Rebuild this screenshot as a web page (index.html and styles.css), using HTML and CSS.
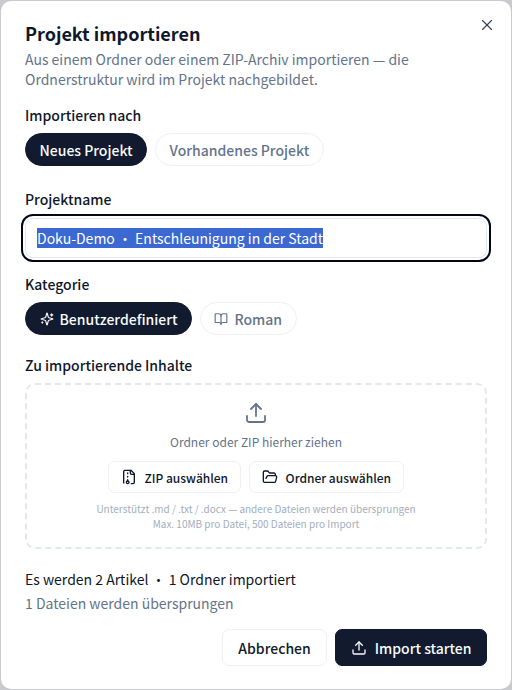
FILE: index.html
```html
<!DOCTYPE html>
<html lang="de">
<head>
    <meta charset="UTF-8">
    <meta name="viewport" content="width=device-width, initial-scale=1.0">
    <title>Projekt importieren</title>
    <link rel="stylesheet" href="styles.css">
</head>
<body>
    <div class="dialog">
        <button class="close" type="button" aria-label="Schließen">
            <svg viewBox="0 0 24 24" width="18" height="18"><path d="M18 6 6 18M6 6l12 12"/></svg>
        </button>

        <h1 class="title">Projekt importieren</h1>
        <p class="desc">Aus einem Ordner oder einem ZIP-Archiv importieren — die Ordnerstruktur wird im Projekt nachgebildet.</p>

        <div class="field field-target">
            <div class="label">Importieren nach</div>
            <div class="pills">
                <button class="pill active" type="button">Neues Projekt</button>
                <button class="pill" type="button">Vorhandenes Projekt</button>
            </div>
        </div>

        <div class="field field-name">
            <div class="label">Projektname</div>
            <div class="input"><span class="selected">Doku-Demo · Entschleunigung in der Stadt</span></div>
        </div>

        <div class="field field-cat">
            <div class="label">Kategorie</div>
            <div class="pills">
                <button class="pill active" type="button">
                    <svg class="icon" viewBox="0 0 24 24" width="14" height="14"><path d="M9.937 15.500A2 2 0 0 0 8.500 14.063l-6.135-1.582a.5.5 0 0 1 0-.962L8.500 9.936A2 2 0 0 0 9.937 8.500l1.582-6.135a.5.5 0 0 1 .963 0L14.063 8.500A2 2 0 0 0 15.500 9.937l6.135 1.581a.5.5 0 0 1 0 .964L15.500 14.063a2 2 0 0 0-1.437 1.437l-1.582 6.135a.5.5 0 0 1-.963 0z"/><path d="M20 3v4M22 5h-4M4 17v2M5 18H3"/></svg>
                    Benutzerdefiniert
                </button>
                <button class="pill" type="button">
                    <svg class="icon" viewBox="0 0 24 24" width="14" height="14"><path d="M12 7v14"/><path d="M3 18a1 1 0 0 1-1-1V4a1 1 0 0 1 1-1h5a4 4 0 0 1 4 4 4 4 0 0 1 4-4h5a1 1 0 0 1 1 1v13a1 1 0 0 1-1 1h-6a3 3 0 0 0-3 3 3 3 0 0 0-3-3z"/></svg>
                    Roman
                </button>
            </div>
        </div>

        <div class="field field-drop">
            <div class="label">Zu importierende Inhalte</div>
            <div class="dropzone">
                <svg class="drop-icon" viewBox="0 0 24 24" width="24" height="24"><path d="M12 3v12"/><path d="m17 8-5-5-5 5"/><path d="M21 15v4a2 2 0 0 1-2 2H5a2 2 0 0 1-2-2v-4"/></svg>
                <div class="drop-text">Ordner oder ZIP hierher ziehen</div>
                <div class="drop-buttons">
                    <button class="btn-small" type="button">
                        <svg class="icon" viewBox="0 0 24 24" width="16" height="16"><path d="M10 12v-1M10 18v-2M10 7V6"/><path d="M14 2v4a2 2 0 0 0 2 2h4"/><path d="M15.500 22H18a2 2 0 0 0 2-2V7l-5-5H6a2 2 0 0 0-2 2v16a2 2 0 0 0 .274 1.010"/><circle cx="10" cy="20" r="2"/></svg>
                        ZIP auswählen
                    </button>
                    <button class="btn-small" type="button">
                        <svg class="icon" viewBox="0 0 24 24" width="16" height="16"><path d="m6 14 1.500-2.900A2 2 0 0 1 9.240 10H20a2 2 0 0 1 1.940 2.500l-1.540 6a2 2 0 0 1-1.950 1.500H4a2 2 0 0 1-2-2V5a2 2 0 0 1 2-2h3.900a2 2 0 0 1 1.690.900l.81 1.200a2 2 0 0 0 1.670.900H18a2 2 0 0 1 2 2v2"/></svg>
                        Ordner auswählen
                    </button>
                </div>
                <div class="drop-hint">Unterstützt .md / .txt / .docx — andere Dateien werden übersprungen<br>Max. 10MB pro Datei, 500 Dateien pro Import</div>
            </div>
        </div>

        <div class="summary">Es werden 2 Artikel · 1 Ordner importiert</div>
        <div class="skipped">1 Dateien werden übersprungen</div>

        <div class="footer">
            <button class="btn" type="button">Abbrechen</button>
            <button class="btn primary" type="button">
                <svg class="icon" viewBox="0 0 24 24" width="16" height="16"><path d="M12 3v12"/><path d="m17 8-5-5-5 5"/><path d="M21 15v4a2 2 0 0 1-2 2H5a2 2 0 0 1-2-2v-4"/></svg>
                Import starten
            </button>
        </div>
    </div>
</body>
</html>
```

FILE: styles.css
```css
* {
    box-sizing: border-box;
}
html, body {
    margin: 0;
    width: 512px;
    height: 690px;
    overflow: hidden;
    background: #c9cacd;
}
body {
    font-family: "Noto Sans CJK SC", "Noto Sans", sans-serif;
    color: #0f172a;
    padding: 1px 1px 0;
}
button {
    font-family: inherit;
    cursor: pointer;
}
svg {
    fill: none;
    stroke: currentColor;
    stroke-width: 2;
    stroke-linecap: round;
    stroke-linejoin: round;
    flex: none;
}
.dialog {
    position: relative;
    height: 688px;
    background: #fff;
    border-radius: 10px;
    padding: 18px 24px 0;
}
.close {
    position: absolute;
    top: 15px;
    right: 15px;
    padding: 0;
    width: 18px;
    height: 18px;
    border: 0;
    background: none;
    color: #334155;
    display: flex;
}
.close svg {
    stroke-width: 1.500;
}
.title {
    margin: 0;
    font-size: 18px;
    line-height: 28px;
    font-weight: 600;
}
.desc {
    margin: 2px 0 0;
    font-size: 14px;
    line-height: 20px;
    color: #64748b;
}
.label {
    font-size: 14px;
    line-height: 20px;
    font-weight: 500;
    color: #0f172a;
}
.field-target {
    margin-top: 16px;
}
.field-name {
    margin-top: 23px;
}
.field-cat {
    margin-top: 16px;
}
.field-drop {
    margin-top: 20px;
}
.pills {
    display: flex;
    gap: 8px;
    margin-top: 8px;
}
.pill {
    display: flex;
    align-items: center;
    gap: 6px;
    height: 33px;
    padding: 0 13.500px;
    border: 1px solid #eef0f4;
    border-radius: 17px;
    background: #fff;
    color: #64748b;
    font-size: 14px;
    font-weight: 500;
}
.pill.active {
    background: #111a2e;
    border-color: #111a2e;
    color: #f8fafc;
}
.input {
    display: flex;
    align-items: center;
    height: 40px;
    margin-top: 9px;
    padding: 0 11px;
    border: 1px solid #e2e8f0;
    border-radius: 8px;
    outline: 2px solid #020617;
    outline-offset: 2px;
    font-size: 14px;
}
.selected {
    background: #3b69d1;
    color: #fff;
    line-height: 20px;
    white-space: pre;
}
.dropzone {
    display: flex;
    flex-direction: column;
    align-items: center;
    height: 166px;
    margin-top: 8px;
    padding-top: 16px;
    border: 2px dashed #e2e8f0;
    border-radius: 10px;
}
.drop-icon {
    color: #64748b;
    stroke-width: 1.800;
}
.drop-text {
    margin-top: 8px;
    font-size: 12px;
    line-height: 18px;
    color: #64748b;
}
.drop-buttons {
    display: flex;
    gap: 8px;
    margin-top: 10px;
}
.btn-small {
    display: flex;
    align-items: center;
    gap: 7.500px;
    height: 32px;
    padding: 0 12px;
    border: 1px solid #eef0f4;
    border-radius: 7px;
    background: #fff;
    color: #0f172a;
    font-size: 12px;
    font-weight: 500;
}
.drop-hint {
    margin-top: 8px;
    font-size: 10px;
    line-height: 15px;
    text-align: center;
    color: #a3aebd;
}
.summary {
    margin-top: 20px;
    font-size: 14px;
    line-height: 20px;
}
.skipped {
    margin-top: 4px;
    font-size: 14px;
    line-height: 20px;
    color: #64748b;
}
.footer {
    display: flex;
    justify-content: flex-end;
    gap: 8px;
    margin-top: 16px;
}
.btn {
    display: flex;
    align-items: center;
    gap: 8px;
    height: 37px;
    padding: 0 15.500px;
    border: 1px solid #eef0f4;
    border-radius: 7px;
    background: #fff;
    color: #0f172a;
    font-size: 14px;
    font-weight: 500;
}
.btn.primary {
    padding: 0 14.500px;
    background: #111a2e;
    border-color: #111a2e;
    color: #f8fafc;
}
```
